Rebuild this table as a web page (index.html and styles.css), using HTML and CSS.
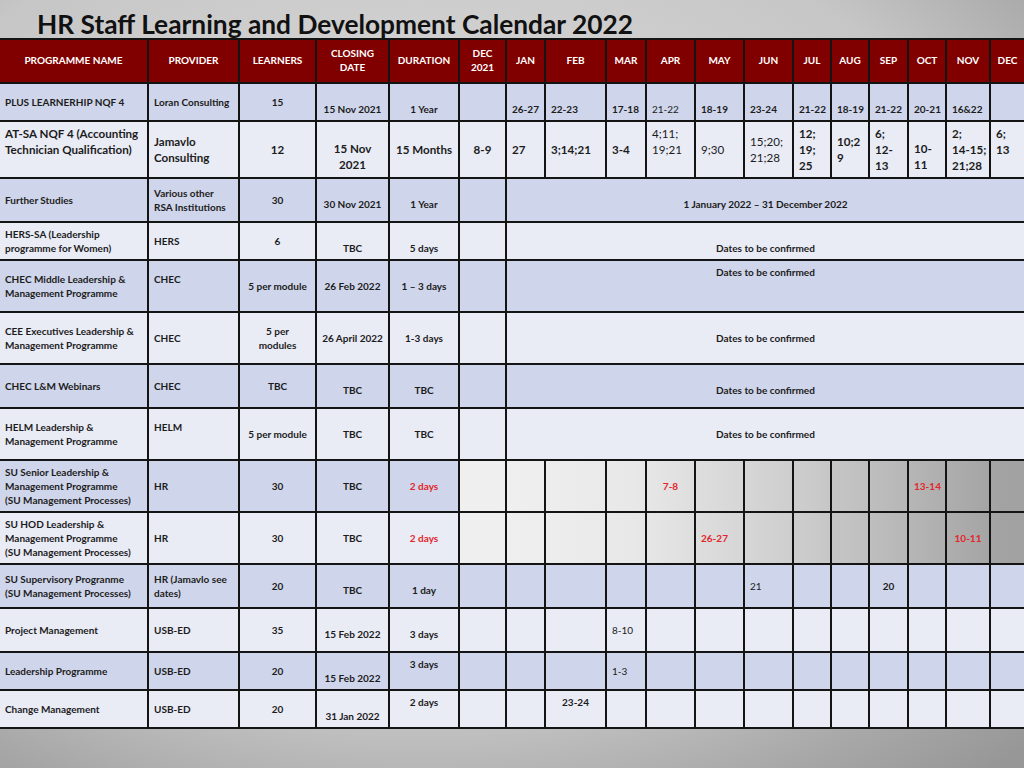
FILE: index.html
```html
<!DOCTYPE html>
<html lang="en">
<head>
<meta charset="utf-8">
<title>HR Staff Learning and Development Calendar 2022</title>
<link rel="stylesheet" href="styles.css">
</head>
<body>
<h1 class="title">HR Staff Learning and Development Calendar 2022</h1>
<table class="cal">
  <colgroup>
    <col style="width:148px"><col style="width:91px"><col style="width:77px"><col style="width:73px"><col style="width:70px"><col style="width:47px">
    <col style="width:39px"><col style="width:61px"><col style="width:40px"><col style="width:49px"><col style="width:49px"><col style="width:49px">
    <col style="width:38px"><col style="width:38px"><col style="width:39px"><col style="width:38px"><col style="width:44px"><col style="width:34px">
  </colgroup>
  <thead>
    <tr class="head">
      <th>PROGRAMME NAME</th><th>PROVIDER</th><th>LEARNERS</th><th>CLOSING<br>DATE</th><th>DURATION</th><th>DEC<br>2021</th>
      <th>JAN</th><th>FEB</th><th>MAR</th><th>APR</th><th>MAY</th><th>JUN</th><th>JUL</th><th>AUG</th><th>SEP</th><th>OCT</th><th>NOV</th><th>DEC</th>
    </tr>
  </thead>
  <tbody>
    <tr class="a h38">
      <td>PLUS LEARNERHIP NQF 4</td><td>Loran Consulting</td><td class="c">15</td><td class="c b">15 Nov 2021</td><td class="c b">1 Year</td><td></td>
      <td class="b">26-27</td><td class="b">22-23</td><td class="b">17-18</td><td class="b n">21-22</td><td class="b">18-19</td><td class="b">23-24</td><td class="b">21-22</td><td class="b">18-19</td><td class="b">21-22</td><td class="b">20-21</td><td class="b">16&amp;22</td><td></td>
    </tr>
    <tr class="w big h57">
      <td class="t">AT-SA NQF 4 (Accounting<br>Technician Qualification)</td><td>Jamavlo<br>Consulting</td><td class="c">12</td><td class="c b">15 Nov<br>2021</td><td class="c">15 Months</td><td class="c">8-9</td>
      <td>27</td><td>3;14;21</td><td>3-4</td><td class="t n">4;11;<br>19;21</td><td class="n">9;30</td><td class="n">15;20;<br>21;28</td><td class="t">12;<br>19;<br>25</td><td>10;2<br>9</td><td class="t">6;<br>12-<br>13</td><td class="b">10-<br>11</td><td class="t">2;<br>14-15;<br>21;28</td><td class="t">6;<br>13</td>
    </tr>
    <tr class="a h44">
      <td>Further Studies</td><td>Various other<br>RSA Institutions</td><td class="c">30</td><td class="c lo">30 Nov 2021</td><td class="c lo">1 Year</td><td></td>
      <td colspan="12" class="c lo">1 January 2022 – 31 December 2022</td>
    </tr>
    <tr class="w h38">
      <td>HERS-SA (Leadership<br>programme for Women)</td><td>HERS</td><td class="c">6</td><td class="c b">TBC</td><td class="c b">5 days</td><td></td>
      <td colspan="12" class="c b">Dates to be confirmed</td>
    </tr>
    <tr class="a h52">
      <td>CHEC Middle Leadership &amp;<br>Management Programme</td><td>CHEC<br>&nbsp;</td><td class="c">5 per module</td><td class="c">26 Feb 2022</td><td class="c">1 – 3 days</td><td></td>
      <td colspan="12" class="c t">Dates to be confirmed</td>
    </tr>
    <tr class="w h52">
      <td>CEE Executives Leadership &amp;<br>Management Programme</td><td>CHEC</td><td class="c">5 per<br>modules</td><td class="c">26 April 2022</td><td class="c">1-3 days</td><td></td>
      <td colspan="12" class="c">Dates to be confirmed</td>
    </tr>
    <tr class="a h44">
      <td>CHEC L&amp;M Webinars</td><td>CHEC</td><td class="c">TBC</td><td class="c lo">TBC</td><td class="c lo">TBC</td><td></td>
      <td colspan="12" class="c lo">Dates to be confirmed</td>
    </tr>
    <tr class="w h52">
      <td>HELM Leadership &amp;<br>Management Programme</td><td>HELM<br>&nbsp;</td><td class="c">5 per module</td><td class="c">TBC</td><td class="c">TBC</td><td></td>
      <td colspan="12" class="c">Dates to be confirmed</td>
    </tr>
    <tr class="a h52">
      <td>SU Senior Leadership &amp;<br>Management Programme<br>(SU Management Processes)</td><td>HR</td><td class="c">30</td><td class="c">TBC</td><td class="c r">2 days</td><td class="x"></td>
      <td class="x"></td><td class="x"></td><td class="x"></td><td class="x c r">7-8</td><td class="x"></td><td class="x"></td><td class="x"></td><td class="x"></td><td class="x"></td><td class="x c r">13-14</td><td class="x"></td><td class="x"></td>
    </tr>
    <tr class="w h52">
      <td>SU HOD Leadership &amp;<br>Management Programme<br>(SU Management Processes)</td><td>HR</td><td class="c">30</td><td class="c">TBC</td><td class="c r">2 days</td><td class="x"></td>
      <td class="x"></td><td class="x"></td><td class="x"></td><td class="x"></td><td class="x r">26-27</td><td class="x"></td><td class="x"></td><td class="x"></td><td class="x"></td><td class="x"></td><td class="x c r">10-11</td><td class="x"></td>
    </tr>
    <tr class="a h44">
      <td>SU Supervisory Progranme<br>(SU Management Processes)</td><td>HR (Jamavlo see<br>dates)</td><td class="c">20</td><td class="c lo">TBC</td><td class="c lo">1 day</td><td></td>
      <td></td><td></td><td></td><td></td><td></td><td class="n">21</td><td></td><td></td><td class="c">20</td><td></td><td></td><td></td>
    </tr>
    <tr class="w h44">
      <td>Project Management</td><td>USB-ED</td><td class="c">35</td><td class="c lo">15 Feb 2022</td><td class="c lo">3 days</td><td></td>
      <td></td><td></td><td class="n">8-10</td><td></td><td></td><td></td><td></td><td></td><td></td><td></td><td></td><td></td>
    </tr>
    <tr class="a h38">
      <td>Leadership Programme</td><td>USB-ED</td><td class="c">20</td><td class="c b">15 Feb 2022</td><td class="c t">3 days</td><td></td>
      <td></td><td></td><td class="n">1-3</td><td></td><td></td><td></td><td></td><td></td><td></td><td></td><td></td><td></td>
    </tr>
    <tr class="w h38">
      <td>Change Management</td><td>USB-ED</td><td class="c">20</td><td class="c b">31 Jan 2022</td><td class="c t">2 days</td><td></td>
      <td></td><td class="c t">23-24</td><td></td><td></td><td></td><td></td><td></td><td></td><td></td><td></td><td></td><td></td>
    </tr>
  </tbody>
</table>
</body>
</html>
```

FILE: styles.css
```css
html, body {
  margin: 0;
  padding: 0;
  width: 1024px;
  height: 768px;
  overflow: hidden;
}

body {
  font-family: Lato, "Liberation Sans", sans-serif;
  color: #1c1c1c;
  background: radial-gradient(ellipse 880px 616px at 420px 300px,
    #e2e2e2 0%, #c6c6c6 66%, #a8a8a8 86%, #979797 100%);
}

.title {
  margin: 0;
  height: 38px;
  box-sizing: border-box;
  padding: 10px 0 0 37px;
  font-size: 26.3px;
  line-height: 28px;
  font-weight: 700;
  color: #111;
  white-space: nowrap;
  overflow: visible;
}

.cal {
  border-collapse: collapse;
  table-layout: fixed;
  width: 1024px;
  font-size: 10px;
  line-height: 14px;
  font-weight: 700;
  background: linear-gradient(to right, #f2f2f2 0%, #efefef 50%, #e8e8e8 62%, #cdcdcd 78%, #a2a2a2 98%);
}

.cal th,
.cal td {
  border: 2px solid #141414;
  padding: 3px 5px;
  vertical-align: middle;
  text-align: left;
  white-space: nowrap;
}

.cal tr > :first-child { border-left: none; }
.cal tr > :last-child { border-right: none; }

.head th {
  height: 44px;
  box-sizing: border-box;
  background: #800000;
  color: #fff;
  font-size: 10px;
  line-height: 14px;
  padding-top: 2px;
  padding-bottom: 4px;
  text-align: center;
}

.a td { background: #cfd5ea; }
.w td { background: #e9ebf5; }
.a td.x, .w td.x { background: transparent; }

.h38 { height: 38px; }
.h44 { height: 44px; }
.h52 { height: 52px; }
.h57 { height: 57px; }

.big td { font-size: 11.6px; line-height: 16px; }

.cal td.c { text-align: center; }
.cal td.t { vertical-align: top; padding-top: 4px; }
.cal td.b { vertical-align: bottom; padding-bottom: 4px; }
.cal td.lo { padding-top: 11px; }
.cal td.n { font-weight: 400; }
.cal td.r { color: #e3262b; }
```
